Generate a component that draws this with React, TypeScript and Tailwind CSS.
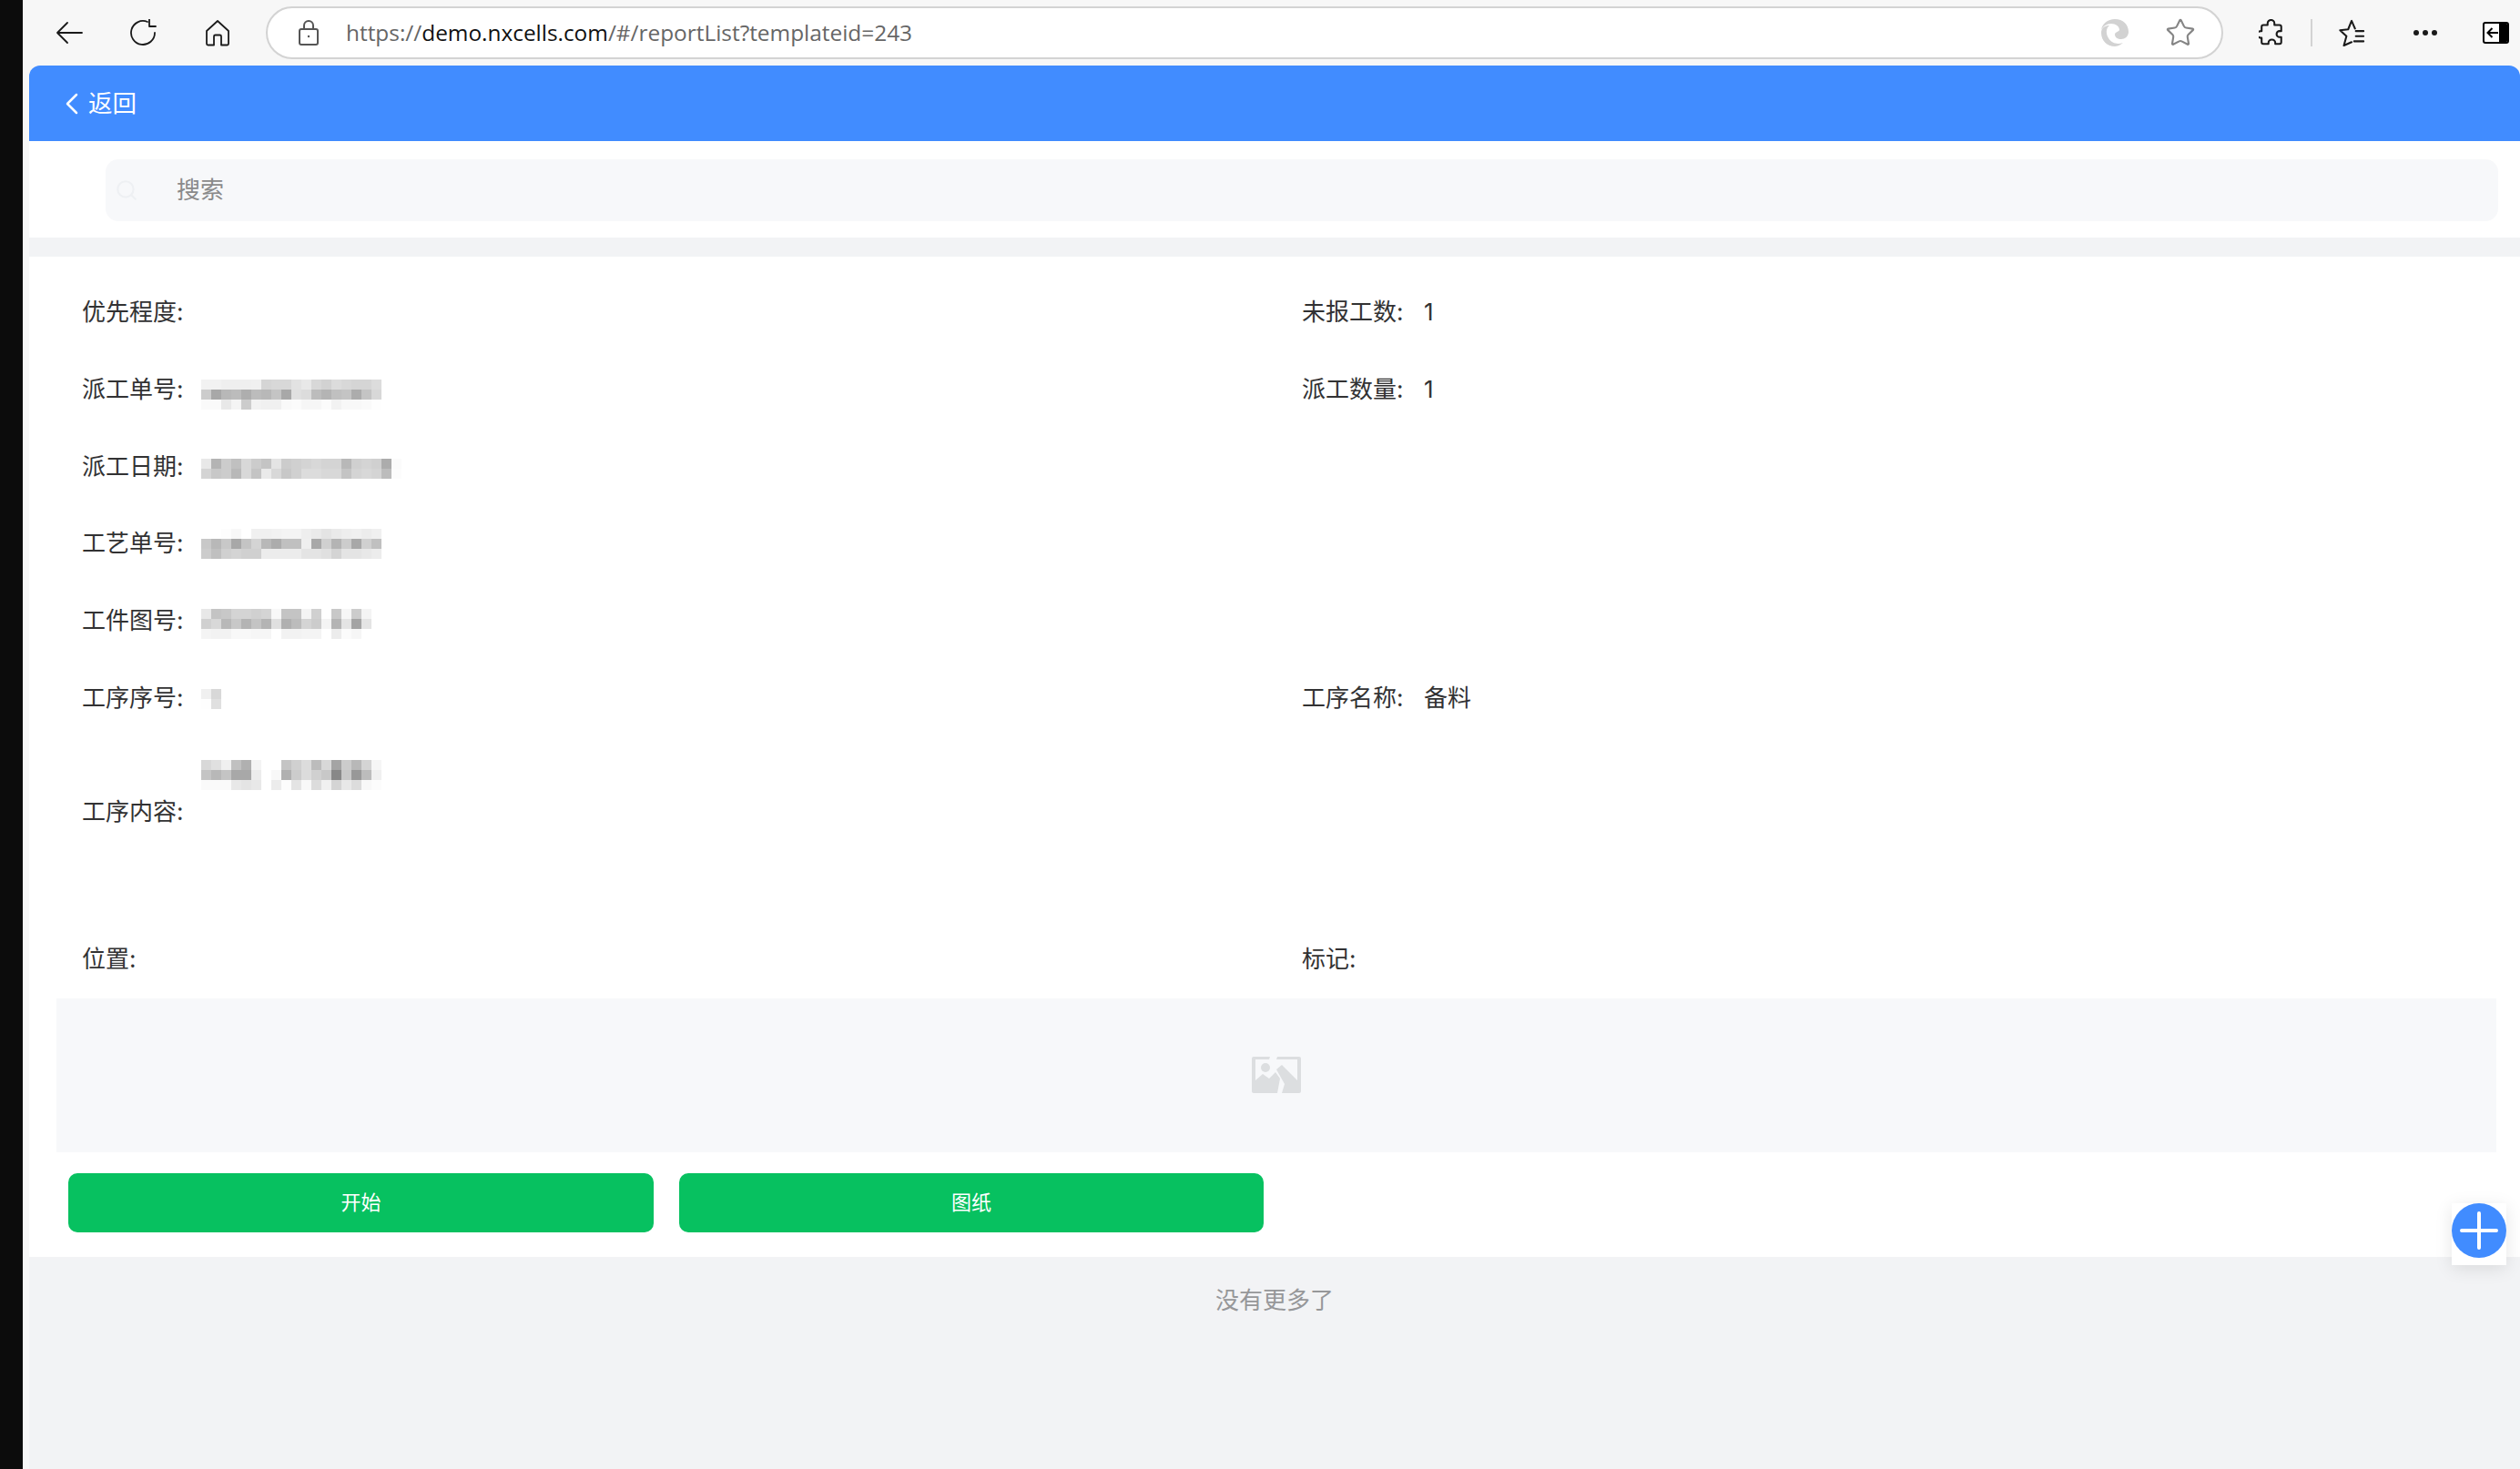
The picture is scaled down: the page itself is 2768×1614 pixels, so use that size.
import { ChevronLeft, Search, Star } from 'lucide-react';

const cjk = 'font-["Inter","Noto_Sans_CJK_SC",sans-serif]';

// pixelated values, one hex grey per block
const MOSAIC = {
    dispatchNo: [
        'f2 f2 ef ef ef f0 d5 d8 d8 e2 e8 d8 d2 dc d8 d5 d5 dc',
        'cc a8 b8 bc ae bc b8 c4 a8 e0 dc bc b4 c0 c4 ac c4 d8',
        'fa fa e8 f4 cc f2 f0 f0 f9 fb f6 f6 fb f2 f8 f8 fa fe',
    ],
    dispatchDate: [
        'e8 b4 cc c0 d8 cc c4 e4 cc d0 d4 d8 d4 d4 b8 d0 d4 d0 ac fb',
        'd4 c8 cc b8 d8 c4 ea d8 c8 d0 dc dc d8 d8 c4 d4 d8 d4 bc fc',
    ],
    processNo: [
        'ff ff fd f8 ff f0 f0 f2 f4 f4 ee ea e4 ea ee f0 ec f0',
        'c8 b8 c8 a8 c4 d4 b8 ac c0 c0 ef a8 d0 b4 cc a8 d0 c0',
        'cc c0 d0 d4 d0 d0 ec ec ec ec e4 e4 e0 d4 e4 e4 e8 ec',
    ],
    drawingNo: [
        'e8 c4 c8 d4 d4 d0 d4 f8 c4 c4 f4 d0 ff c8 f6 cc f4',
        'd0 d8 b8 c8 b4 c4 b4 e0 b0 bc d4 cc f4 b4 e4 a4 e4',
        'f4 f2 f2 f8 f8 f6 f6 ff f2 f2 f4 f4 ff ec fb f6 ff',
    ],
    stepNo: ['f0 d8', 'fe e0'],
    stepContent: [
        'd8 e0 f0 c0 b0 f4 ff ff c4 d0 dc bc d8 a4 cc b8 d4 f6',
        'c4 b8 c4 a8 a8 ec ff f8 b0 cc dc d0 c8 88 c8 98 bc f0',
        'fa fa fa e8 e4 e8 ff ec fc e4 f8 dc f0 d4 e8 dc f8 fc',
    ],
};

function Mosaic({ rows, className }: { rows: string[]; className?: string }) {
    const cells = rows.map((r) => r.split(' '));
    const cols = cells[0].length;
    return (
        <svg width={cols * 11} height={rows.length * 11} className={className} shapeRendering="crispEdges">
            {cells.map((row, y) =>
                row.map((c, x) => (
                    <rect key={`${x}-${y}`} x={x * 11} y={y * 11} width={11} height={11} fill={`#${c}${c}${c}`} />
                )),
            )}
        </svg>
    );
}

function Field({ label, children }: { label: string; children?: React.ReactNode }) {
    return (
        <div className="flex h-[84.7px] items-center">
            <span className="w-[134px] shrink-0">{label}:</span>
            {children}
        </div>
    );
}

function BrowserBar() {
    return (
        <div className="flex h-[72px] items-center bg-[#f7f7f7]">
            <svg className="ml-[36px] h-[26px] w-[30px]" viewBox="0 0 30 26" fill="none" stroke="#1a1a1a" strokeWidth="1.8" strokeLinecap="round" strokeLinejoin="round">
                <path d="M29 13 H2 M13 2 L2 13 L13 24" />
            </svg>
            <svg className="ml-[51px] h-[30px] w-[30px]" viewBox="0 0 30 30" fill="none" stroke="#1a1a1a" strokeWidth="1.8" strokeLinecap="round" strokeLinejoin="round">
                <path d="M20 3 A13 13 0 1 0 28 15" />
                <path d="M21 1 V9 H28" transform="translate(1 -1)" />
            </svg>
            <svg className="ml-[53px] h-[30px] w-[28px]" viewBox="0 0 28 30" fill="none" stroke="#1a1a1a" strokeWidth="1.8" strokeLinejoin="round">
                <path d="M14 2 L2 13 V27 a1.5 1.5 0 0 0 1.5 1.5 H10 V19 a1.5 1.5 0 0 1 1.5-1.5 h5 a1.5 1.5 0 0 1 1.5 1.5 V28.5 h6.5 a1.5 1.5 0 0 0 1.5-1.5 V13 Z" />
            </svg>
            <div className="ml-[39px] flex h-[58px] w-[2150px] items-center rounded-[29px] border-2 border-[#d3d3d3] bg-white">
                <svg className="ml-[33px] h-[28px] w-[24px]" viewBox="0 0 24 28" fill="none" stroke="#555" strokeWidth="2">
                    <rect x="2" y="10" width="20" height="17" rx="2" />
                    <path d="M7 10 V6 a5 5 0 0 1 10 0 V10" />
                    <circle cx="12" cy="18" r="1.2" fill="#555" stroke="none" />
                </svg>
                <span className="ml-[29px] font-['Open_Sans',sans-serif] text-[24.4px] text-[#666]">
                    https://<span className="text-[#111]">demo.nxcells.com</span>/#/reportList?templateid=243
                </span>
                <svg className="ml-auto h-[30px] w-[30px]" viewBox="0 0 30 30" fill="#d2d2d2">
                    <path d="M15 0 C24 0 30 6 30 14 C30 19 26 22 22 22 C18 22 15 20 15 17 C15 14 19 14 20 12 C20 8 16 5 11 5 C6 5 2 8 0 12 C1 5 7 0 15 0 Z" />
                    <path d="M0 15 C0 9 5 7 9 7 C5 10 5 16 8 21 C12 27 18 28 24 26 C20 29 17 30 15 30 C7 30 0 24 0 15 Z" />
                </svg>
                <Star className="ml-[40px] mr-[28px] h-[34px] w-[34px] text-[#858585]" strokeWidth={1.5} />
            </div>
            <svg className="ml-[39px] h-[30px] w-[27px]" viewBox="0 0 28 32" fill="none" stroke="#1a1a1a" strokeWidth="2.2" strokeLinejoin="round">
                <path d="M10 5 a4 4 0 0 1 8 0 V7 h6 a2 2 0 0 1 2 2 v5 h-2 a3.5 3.5 0 0 0 0 7 h2 v6 a2 2 0 0 1-2 2 h-5 v-1 a4 4 0 0 0-8 0 v1 H5 a2 2 0 0 1-2-2 v-5 h-1 a3.5 3.5 0 0 1 0-8 h1 V9 a2 2 0 0 1 2-2 h5 Z" />
            </svg>
            <div className="ml-[30px] h-[30px] w-[2px] bg-[#d3d3d3]" />
            <svg className="ml-[28px] h-[30px] w-[30px]" viewBox="0 0 30 32" fill="none" stroke="#1a1a1a" strokeWidth="2.2" strokeLinejoin="round" strokeLinecap="round">
                <path d="M19 11 L15 2 L11 12 L1.5 13 L9 20 L6 31 L15 27" />
                <path d="M20 14 H29 M20 20 H29 M18 26 H29" />
            </svg>
            <svg className="ml-[53px] h-[8px] w-[26px]" viewBox="0 0 26 8" fill="#1a1a1a">
                <circle cx="3" cy="4" r="3" />
                <circle cx="13" cy="4" r="3" />
                <circle cx="23" cy="4" r="3" />
            </svg>
            <div className="ml-[50px] flex h-[24px] w-[29px] overflow-hidden rounded-[3px] border-2 border-black bg-white">
                <div className="flex flex-1 items-center justify-center">
                    <svg width="13" height="12" viewBox="0 0 13 12" fill="none" stroke="#000" strokeWidth="2">
                        <path d="M13 6 H2 M6.5 1 L1.5 6 L6.5 11" />
                    </svg>
                </div>
                <div className="w-[9px] bg-black" />
            </div>
        </div>
    );
}

export default function App() {
    return (
        <div className="flex h-[1614px] w-[2768px] overflow-hidden bg-[#f7f7f7]">
            <div className="w-[25px] shrink-0 bg-[#0c0c0c]" />
            <div className="flex min-w-0 flex-1 flex-col">
                <BrowserBar />
                <main className={`relative ml-[7px] flex-1 overflow-hidden rounded-t-[12px] bg-[#f2f3f5] text-[26px] leading-none text-[#323233] ${cjk}`}>
                    {/* Nav */}
                    <div className="flex h-[83px] items-center bg-[#418cff] pl-[27px] text-white">
                        <ChevronLeft className="h-[40px] w-[40px]" strokeWidth={1.5} />
                        <span className="-ml-[2px] text-[26.5px]">返回</span>
                    </div>

                    {/* Search */}
                    <div className="h-[106px] bg-white pl-[84px] pr-[24px] pt-[20px]">
                        <div className="flex h-[68px] items-center rounded-[14px] bg-[#f7f8fa] pl-[10px] text-[#8a8a8a]">
                            <Search className="h-[26px] w-[26px] text-[#eef0f3]" />
                            <span className="ml-[42px]">搜索</span>
                        </div>
                    </div>

                    <div className="relative mt-[21px] bg-white pb-[27px]">
                        <div className="grid grid-cols-[1340px_1fr] pl-[58px] pt-[19px]">
                            <Field label="优先程度" />
                            <Field label="未报工数"><span>1</span></Field>
                            <Field label="派工单号"><Mosaic rows={MOSAIC.dispatchNo} className="-ml-[3px] mt-[10px]" /></Field>
                            <Field label="派工数量"><span>1</span></Field>
                            <Field label="派工日期"><Mosaic rows={MOSAIC.dispatchDate} className="-ml-[3px] mt-[4px]" /></Field>
                            <div />
                            <Field label="工艺单号"><Mosaic rows={MOSAIC.processNo} className="-ml-[3px] mt-[1px]" /></Field>
                            <div />
                            <Field label="工件图号"><Mosaic rows={MOSAIC.drawingNo} className="-ml-[3px] mt-[6px]" /></Field>
                            <div />
                            <Field label="工序序号"><Mosaic rows={MOSAIC.stepNo} className="-ml-[3px] mt-[3px]" /></Field>
                            <Field label="工序名称"><span>备料</span></Field>
                            <div className="col-span-2 flex h-[203px] items-start">
                                <span className="mt-[70px] w-[131px] shrink-0">工序内容:</span>
                                <Mosaic rows={MOSAIC.stepContent} className="mt-[26px]" />
                            </div>
                            <Field label="位置" />
                            <Field label="标记" />
                        </div>

                        {/* Image placeholder */}
                        <div className="ml-[30px] mr-[26px] flex h-[169px] items-center justify-center bg-[#f7f8fa]">
                            <svg width="54" height="40" viewBox="0 0 54 40" fill="#dcdee0">
                                <path d="M2 0 H20 L19 3 H4 V26 L12 19 L19 24 L26 17 L31 24 L28 40 H2 a2 2 0 0 1-2-2 V2 a2 2 0 0 1 2-2 Z" />
                                <path d="M28 0 H52 a2 2 0 0 1 2 2 V38 a2 2 0 0 1-2 2 H33 L36 30 L27 14 L33 9 L50 26 V3 H27 Z" />
                                <circle cx="15" cy="12" r="5" />
                            </svg>
                        </div>

                        {/* Actions */}
                        <div className="ml-[43px] mt-[23px] flex gap-[28px]">
                            <button className="h-[65px] w-[643px] rounded-[10px] bg-[#07c160] text-[22px] text-white">开始</button>
                            <button className="h-[65px] w-[642px] rounded-[10px] bg-[#07c160] text-[22px] text-white">图纸</button>
                        </div>
                    </div>

                    <div className="pt-[35px] text-center text-[#969799]">没有更多了</div>

                    {/* Floating add button */}
                    <div className="absolute left-[2661px] top-[1250px] h-[68px] w-[60px] bg-white shadow-[0_4px_18px_rgba(0,0,0,0.1)]">
                        <svg width="60" height="60" viewBox="0 0 60 60">
                            <circle cx="30" cy="30" r="30" fill="#418cff" />
                            <path d="M30 11 V49 M11 30 H49" stroke="white" strokeWidth="4" strokeLinecap="round" />
                        </svg>
                    </div>
                </main>
            </div>
        </div>
    );
}
